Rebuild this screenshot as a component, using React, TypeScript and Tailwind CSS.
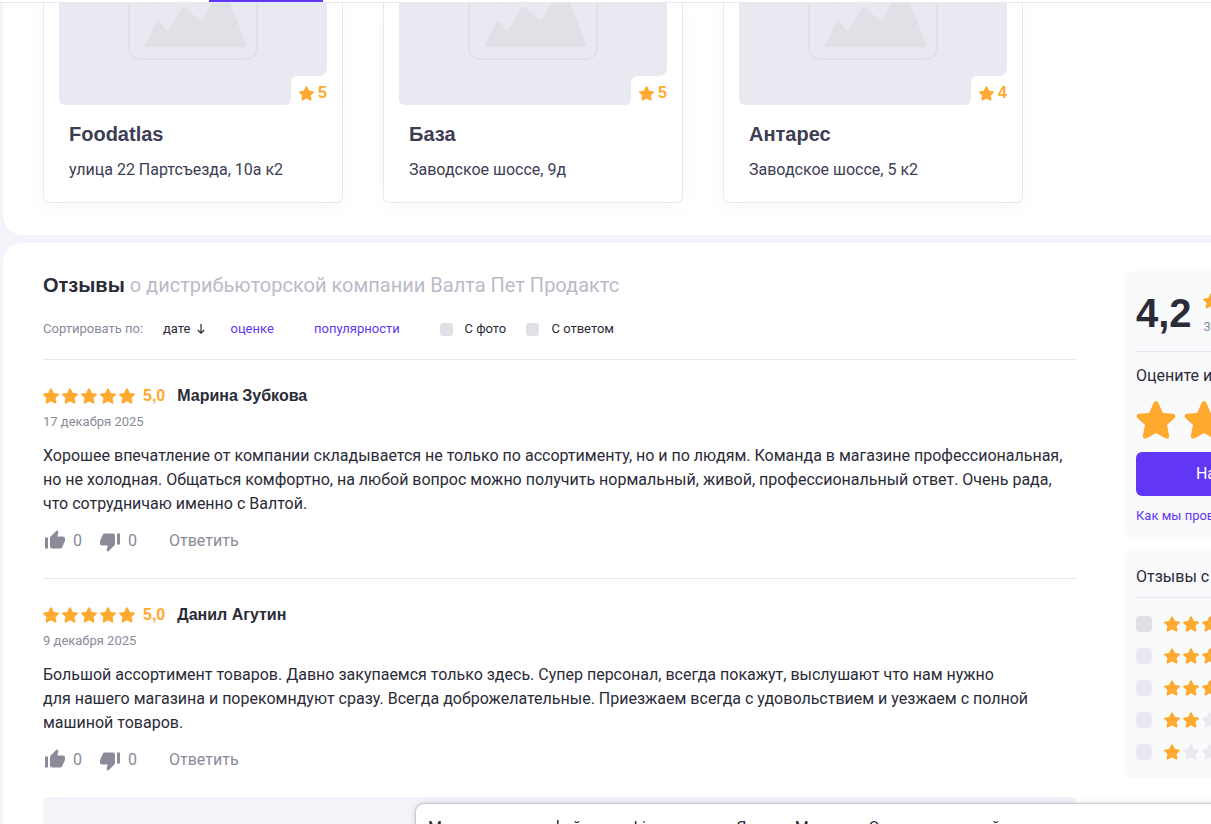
import { clsx } from 'clsx';

interface Branch {
  name: string;
  address: string;
  rating: number;
}

interface Review {
  author: string;
  date: string;
  lines: string[];
}

const BRANCHES: Branch[] = [
  { name: 'Foodatlas', address: 'улица 22 Партсъезда, 10а к2', rating: 5 },
  { name: 'База', address: 'Заводское шоссе, 9д', rating: 5 },
  { name: 'Антарес', address: 'Заводское шоссе, 5 к2', rating: 4 },
];

const REVIEWS: Review[] = [
  {
    author: 'Марина Зубкова',
    date: '17 декабря 2025',
    lines: [
      'Хорошее впечатление от компании складывается не только по ассортименту, но и по людям. Команда в магазине профессиональная,',
      'но не холодная. Общаться комфортно, на любой вопрос можно получить нормальный, живой, профессиональный ответ. Очень рада,',
      'что сотрудничаю именно с Валтой.',
    ],
  },
  {
    author: 'Данил Агутин',
    date: '9 декабря 2025',
    lines: [
      'Большой ассортимент товаров. Давно закупаемся только здесь. Супер персонал, всегда покажут, выслушают что нам нужно',
      'для нашего магазина и порекомндуют сразу. Всегда доброжелательные. Приезжаем всегда с удовольствием и уезжаем с полной',
      'машиной товаров.',
    ],
  },
];

function Star({ className }: { className?: string }) {
  return (
    <svg viewBox="0 0 40 39" className={clsx('shrink-0 fill-current', className)}>
      <path d="M17.6 1.7Q20-1.5 22.4 1.7L27 12.2 37.6 13.2Q41 14 39.2 17.2L31.3 24.6 33.5 35.4Q33.6 39.2 30 38.4L20 32.8 10 38.4Q6.4 39.2 6.5 35.4L8.7 24.6.8 17.2Q-1 14 2.4 13.2L13 12.2Z" />
    </svg>
  );
}

function Stars({ value }: { value: number }) {
  return (
    <div className="flex gap-[3px]">
      {[1, 2, 3, 4, 5].map((n) => (
        <Star key={n} className={clsx('h-4 w-4', n <= value ? 'text-[#ffa92e]' : 'text-[#e9e9f2]')} />
      ))}
    </div>
  );
}

function Thumb({ down }: { down?: boolean }) {
  return (
    <svg
      viewBox="0 0 20 19"
      className={clsx('mb-[3px] h-[19px] w-5 shrink-0 fill-current', down && 'translate-y-[3px] rotate-180')}
    >
      <path d="M0 7.500h3V18.500H0zM5 8.300Q5 7.300 5.700 6.600L11.900 .2 13 1.200Q13.500 1.700 13.300 2.500L12.300 6.500H18Q20 6.500 20 8.500V10.300Q20 10.800 19.800 11.300L17.200 17.200Q16.600 18.500 15.300 18.500H7Q5 18.500 5 16.500Z" />
    </svg>
  );
}

function BranchCard({ branch }: { branch: Branch }) {
  return (
    <article className="h-[200px] w-[300px] shrink-0 rounded-b-md border border-t-0 border-[#e8e8f2] bg-white px-[15px] shadow-[0_4px_20px_rgba(0,0,0,0.03)]">
      <div className="h-[73px] rounded-br-lg bg-[#e9e9f2]">
        <svg viewBox="0 0 268 73" className="h-[73px] w-[268px]">
          <path d="M70 0V43.500Q70 56 82.500 56H185.500Q198 56 198 43.500V0" fill="none" stroke="#e0e1e6" strokeWidth="2" />
          <path
            d="M86 42 97 19.500Q99 16 101.500 19.500L106.500 26.500Q108.300 28.500 110 26L122 6Q125 2 128 6L139.500 16Q142 18.500 144 15.500L153 0H171L187 41Q187.500 44 185 44H88Q85 44 86 42ZM95 0H104Q99.500 2 95 0Z"
            fill="#e0e1e6"
          />
        </svg>
      </div>
      <div className="flex h-[29px]">
        <div className="w-[232px] rounded-br-md rounded-bl-md bg-[#e9e9f2]" />
        <div className="h-5 flex-1 bg-[#e9e9f2]">
          <div className="flex h-[29px] items-center gap-1 rounded-tl-md bg-white pt-1 pl-2 text-[#ffa92e]">
            <Star className="mt-px h-[15px] w-[15px]" />
            <span className="font-['Liberation_Sans',sans-serif] font-bold">{branch.rating}</span>
          </div>
        </div>
      </div>
      <h3 className="mt-[15px] ml-2.5 font-['Liberation_Sans',sans-serif] text-xl leading-7 font-bold text-[#3d3d54]">
        {branch.name}
      </h3>
      <p className="mt-2.5 ml-2.5 text-[#3d3d54]">{branch.address}</p>
    </article>
  );
}

function ReviewItem({ review }: { review: Review }) {
  return (
    <article className="h-[219px] pt-6">
      <div className="flex h-6 items-center">
        <Stars value={5} />
        <span className="ml-2 font-['Liberation_Sans',sans-serif] font-bold text-[#ffa92e]">5,0</span>
        <span className="ml-3 font-['Liberation_Sans',sans-serif] font-bold">{review.author}</span>
      </div>
      <div className="mt-1 text-[13px] leading-5 text-[#8a8a99]">{review.date}</div>
      <div className="mt-3 whitespace-nowrap">
        {review.lines.map((line) => (
          <p key={line}>{line}</p>
        ))}
      </div>
      <div className="mt-[13px] flex h-6 items-center pl-0.5 text-[#8a8a99]">
        <Thumb />
        <span className="ml-2">0</span>
        <span className="ml-[18px] flex">
          <Thumb down />
        </span>
        <span className="ml-2">0</span>
        <button className="ml-8">Ответить</button>
      </div>
    </article>
  );
}

function SortBar() {
  return (
    <div className="mt-5 flex h-5 items-center text-[13px] leading-5 whitespace-nowrap">
      <span className="w-[120px] text-[#8a8a99]">Сортировать по:</span>
      <span>дате</span>
      <svg viewBox="0 0 8 10" className="ml-[7px] h-2.5 w-2" fill="none" stroke="currentColor" strokeWidth="1.2">
        <path d="M4 0V9.200M.8 6 4 9.200 7.200 6" />
      </svg>
      <span className="ml-[25px] w-[83.5px] text-[#6236f5]">оценке</span>
      <span className="w-[126px] text-[#6236f5]">популярности</span>
      <i className="h-[13px] w-[13px] rounded-[3px] bg-[#e0e1e6]" />
      <span className="ml-[11.5px] w-[62px]">С фото</span>
      <i className="h-[13px] w-[13px] rounded-[3px] bg-[#e0e1e6]" />
      <span className="ml-3">С ответом</span>
    </div>
  );
}

function Sidebar() {
  return (
    <aside className="w-[266px] shrink-0 whitespace-nowrap">
      <section className="h-[268px] rounded-lg bg-[#f9fafc] px-3 pt-3">
        <div className="flex h-[69px] border-b border-[#e8e8ec]">
          <span className="pt-1.5 font-['Liberation_Sans',sans-serif] text-[40px] leading-[48px] font-bold">4,2</span>
          <div className="ml-[11px] pt-2.5">
            <Stars value={4} />
            <div className="mt-2 ml-px text-[13px] leading-5 text-[#8a8a99]">3 оценки</div>
          </div>
        </div>
        <div className="mt-3">Оцените и оставьте отзыв</div>
        <div className="mt-[13px] flex gap-2 text-[#ffa92e]">
          {[1, 2, 3, 4, 5].map((n) => (
            <Star key={n} className="mb-px h-[38px] w-10" />
          ))}
        </div>
        <button className="mt-3 h-11 w-full rounded-md bg-[#6236f5] text-white">Написать отзыв</button>
        <div className="mt-2.5 text-[13px] leading-5 text-[#6236f5]">Как мы проверяем отзывы</div>
      </section>
      <section className="mt-2.5 h-[229px] rounded-lg bg-[#f9fafc] px-3 pt-4">
        <div className="h-[33px] border-b border-[#e8e8ec]">Отзывы с оценкой</div>
        <div className="mt-[18px] flex flex-col gap-4">
          {[5, 4, 3, 2, 1].map((value) => (
            <div key={value} className="flex items-center gap-3">
              <i className={clsx('h-4 w-4 rounded', value === 5 ? 'bg-[#e0e1e6]' : 'bg-[#e9e9f2]')} />
              <Stars value={value} />
            </div>
          ))}
        </div>
      </section>
    </aside>
  );
}

export default function App() {
  return (
    <div className="relative h-[824px] w-full overflow-hidden bg-[#f3f4f9] font-[Roboto,sans-serif] text-base leading-6 text-[#2b2b38]">
      <header className="h-[3px] border-b border-[#e8e8f2] bg-white">
        <div className="ml-[209px] h-0.5 w-[114px] bg-[#6236f5]" />
      </header>

      <section className="ml-[3px] flex h-[232px] gap-10 overflow-hidden rounded-bl-[20px] bg-white pl-10">
        {BRANCHES.map((branch) => (
          <BranchCard key={branch.name} branch={branch} />
        ))}
      </section>

      <section className="mt-2 ml-[3px] flex h-[581px] gap-12 overflow-hidden rounded-tl-[20px] bg-white pt-7 pl-10">
        <main className="w-[1033px] shrink-0">
          <h2 className="text-xl leading-7 text-[#bbbbc7]">
            <b className="font-['Liberation_Sans',sans-serif] text-[#2b2b38]">Отзывы</b> о дистрибьюторской компании Валта
            Пет Продактс
          </h2>
          <SortBar />
          <div className="mt-5 border-t border-[#e8e8ec]">
            <ReviewItem review={REVIEWS[0]} />
          </div>
          <div className="-mt-px border-t border-[#e8e8f2]">
            <ReviewItem review={REVIEWS[1]} />
          </div>
          <div className="-mt-px h-20 rounded-md bg-[#f3f4f9]" />
        </main>
        <Sidebar />
      </section>

      <div className="absolute top-[804px] left-[416px] h-24 w-[820px] rounded-lg bg-white px-3 pt-3 whitespace-nowrap shadow-[0_0_3px_rgba(0,0,0,0.35),0_0_10px_rgba(0,0,0,0.1)]">
        Мы используем файлы cookie, и данные Яндекс Метрика. Оставаясь на сайте, вы
      </div>
    </div>
  );
}
